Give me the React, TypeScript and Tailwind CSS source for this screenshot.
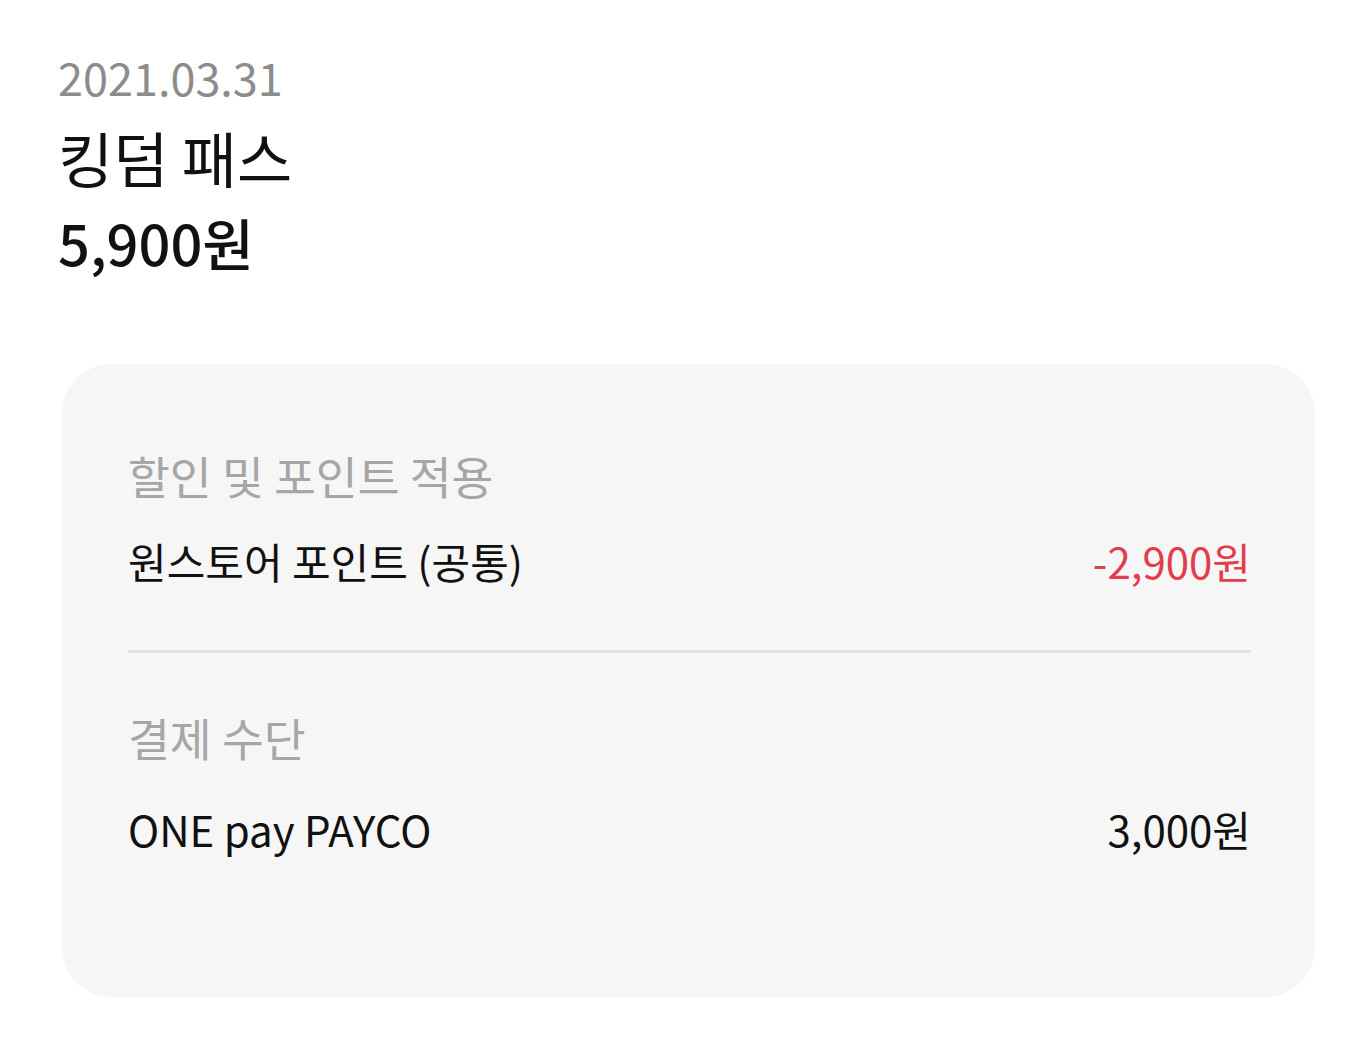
export default function App() {
  const font = { fontFamily: '"Noto Sans CJK KR", "Noto Sans", sans-serif' };

  return (
    <div className="min-h-[1051px] w-[1360px] bg-white" style={font}>
      <div className="px-[58px] pt-[47px]">
        <p className="text-[45px] leading-[60px] text-[#8c8c8c]">2021.03.31</p>
        <h1 className="mt-[10px] text-[60px] leading-[80px] text-[#111]">킹덤 패스</h1>
        <p className="mt-[5px] text-[56px] leading-[80px] font-medium text-[#111]">5,900원</p>
      </div>

      <div className="ml-[62px] mr-[45px] mt-[82px] rounded-[50px] bg-[#f6f6f6] pl-[66px] pr-[64px] pt-[81px] pb-[140px]">
        <h2 className="text-[45.5px] leading-[60px] text-[#a6a6a6]">할인 및 포인트 적용</h2>
        <div className="mt-[28px] flex items-center justify-between text-[42px] leading-[56px]">
          <span className="text-[#111]">원스토어 포인트 (공통)</span>
          <span className="text-[#e23d4b]">-2,900원</span>
        </div>

        <div className="mt-[61px] h-[3px] bg-[#e3e3e3]" />

        <h2 className="mt-[54px] text-[45.5px] leading-[60px] text-[#a6a6a6]">결제 수단</h2>
        <div className="mt-[34px] flex items-center justify-between text-[42px] leading-[56px]">
          <span className="text-[#111]">ONE pay PAYCO</span>
          <span className="text-[#111]">3,000원</span>
        </div>
      </div>
    </div>
  );
}
